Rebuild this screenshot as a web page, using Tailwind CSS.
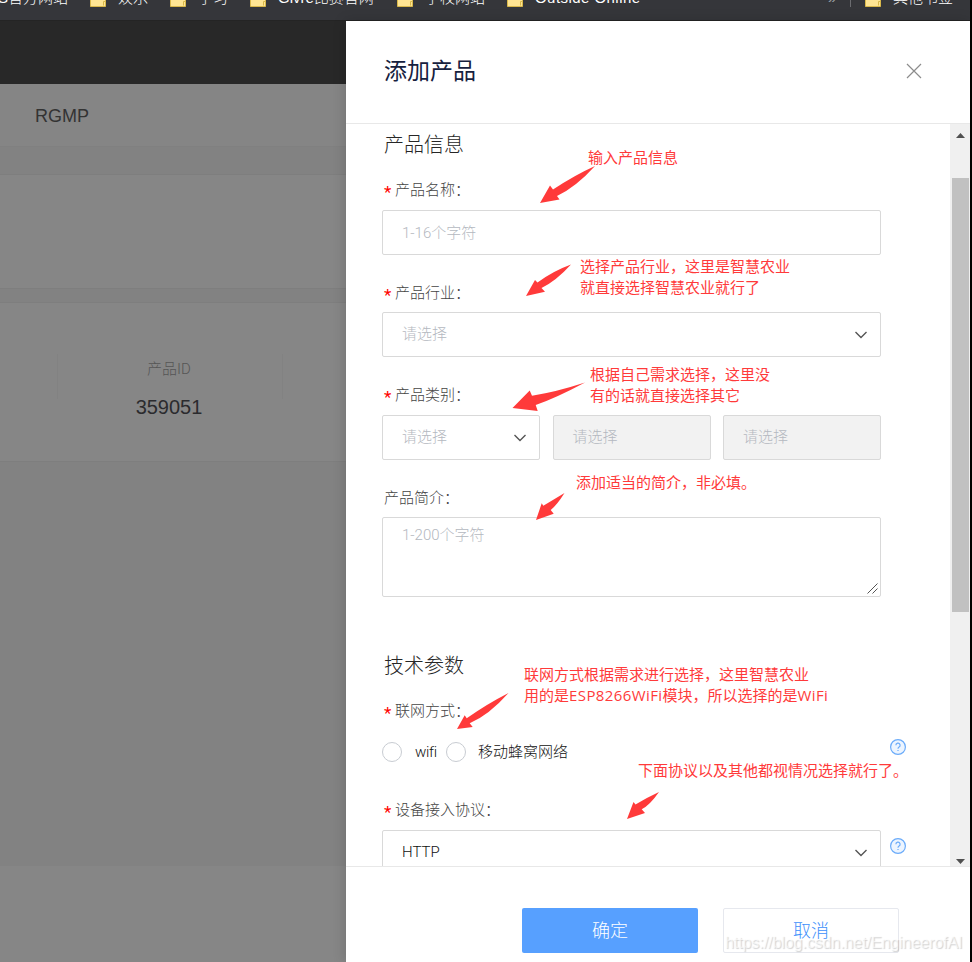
<!DOCTYPE html>
<html lang="zh-CN">
<head>
    <meta charset="UTF-8">
    <meta name="viewport" content="width=device-width, initial-scale=1.0">
    <title>添加产品</title>
    <script src="https://cdn.jsdelivr.net/npm/@tailwindcss/browser@4"></script>
</head>
<body class="font-['Liberation_Sans','Noto_Sans_CJK_SC',sans-serif]">
    <svg class="hidden">
        <symbol id="folder" viewBox="0 0 16 16">
            <path d="M.5 1.5h6l1 2h8v12H.5z" fill="#ffe593" stroke="#d9b84a"/>
            <path d="M13.5 14.5v-4h1.5" fill="none" stroke="#d9b84a"/>
        </symbol>
        <symbol id="chevron" viewBox="0 0 12 8">
            <path d="M.5 1 6 6.5 11.5 1" fill="none" stroke="#555" stroke-width="1.4"/>
        </symbol>
        <symbol id="help" viewBox="0 0 16 16">
            <circle cx="8" cy="8" r="7.4" fill="#edf5ff" stroke="#6aabfa" stroke-width="1.2"/>
            <path d="M5.9 6.3a2.1 2.1 0 1 1 3.2 1.7C8.3 8.5 8 8.8 8 9.7M8 10.9v1.2" fill="none" stroke="#6aabfa" stroke-width="1.2"/>
        </symbol>
    </svg>

    <div class="relative w-[972px] h-[962px] overflow-hidden bg-black flex flex-col">
        <!-- Bookmarks bar -->
        <div class="h-5 w-[970px] shrink-0 bg-[#35363a] overflow-hidden">
            <div class="flex items-center h-4 -mt-[9px] text-[15px] leading-[13px] font-light text-white whitespace-nowrap">
                <span class="w-[90px] h-4 -indent-[2px] shrink-0">S官方网站</span>
                <span class="w-20 shrink-0 flex gap-3"><svg class="size-4"><use href="#folder"/></svg>娱乐</span>
                <span class="w-20 shrink-0 flex gap-3"><svg class="size-4"><use href="#folder"/></svg>学习</span>
                <span class="w-[147px] shrink-0 flex gap-3"><svg class="size-4"><use href="#folder"/></svg>Givre比赛官网</span>
                <span class="w-[110px] shrink-0 flex gap-3"><svg class="size-4"><use href="#folder"/></svg>学校网站</span>
                <span class="flex-1 flex gap-3"><svg class="size-4"><use href="#folder"/></svg><span class="tracking-[0.45px]">Outside Online</span></span>
                <span class="w-[22px] h-4 text-[#9aa0a6]">»</span>
                <span class="w-[15px] h-4 border-l border-[#6b6c70]"></span>
                <span class="w-[105px] shrink-0 flex gap-3"><svg class="size-4"><use href="#folder"/></svg>其他书签</span>
            </div>
        </div>

        <div class="flex w-[970px] flex-1 border-t border-[#242424]">
            <!-- Dimmed page behind the drawer -->
            <div class="w-[346px] shrink-0 bg-[#828282] flex flex-col">
                <div class="h-[63px] bg-[#282828]"></div>
                <div class="h-[63px] bg-[#858585] border-b border-[#808080] flex items-center pt-0.5 pl-[35px] text-[18px] text-[#333]">RGMP</div>
                <div class="h-[27px]"></div>
                <div class="h-[115px] bg-[#868686] border-y border-[#7e7e7e]"></div>
                <div class="h-[13px]"></div>
                <div class="h-[160px] bg-[#868686] border-y border-[#7e7e7e] flex pt-[51px]">
                    <div class="ml-[57px] w-[226px] h-[45px] border-x border-[#828282] text-center">
                        <div class="text-[15px] leading-5 mt-[5px] -ml-0.5 font-light font-['Roboto','Noto_Sans_CJK_SC',sans-serif] text-[#555]">产品ID</div>
                        <div class="text-[20px] leading-6 mt-4 -ml-0.5 text-[#2b2b2e]">359051</div>
                    </div>
                </div>
                <div class="h-[404px]"></div>
                <div class="flex-1 bg-[#868686]"></div>
            </div>

            <!-- Drawer -->
            <div class="flex-1 min-w-0 bg-white flex flex-col shadow-[-1px_0_12px_rgba(0,0,0,0.15)] font-light font-['Roboto','Noto_Sans_CJK_SC',sans-serif]">
                <div class="h-[103px] shrink-0 border-b border-[#e8e8e8] flex items-center justify-between pl-[38px] pr-12">
                    <h1 class="pt-px text-[23px] font-normal text-[#16213e]">添加产品</h1>
                    <svg class="size-4 -mt-0.5" viewBox="0 0 16 16"><path d="M1 1l14 14M15 1L1 15" stroke="#8c8c8c" stroke-width="1.2"/></svg>
                </div>

                <div class="h-[742px] shrink-0 flex overflow-hidden">
                    <div class="flex-1 min-w-0 pl-9 text-[15px] text-[#444]">
                        <div class="w-[499px]">
                            <h2 class="pl-0.5 pt-[7px] h-[52px] text-[20px] leading-7 text-[#262626]">产品信息</h2>
                            <div class="h-[34px] pt-1 pl-0.5 leading-5 flex"><span class="w-[11px] pt-0.5 text-[17px] font-normal text-[#f00]">*</span>产品名称：</div>
                            <div class="h-[45px] border border-[#d9d9d9] rounded-xs flex items-center pt-px pl-[19px] text-[#b4b8c0]">1-16个字符</div>

                            <div class="h-[57px] pt-7 pl-0.5 leading-5 flex"><span class="w-[11px] pt-0.5 text-[17px] font-normal text-[#f00]">*</span>产品行业：</div>
                            <div class="h-[45px] border border-[#d9d9d9] rounded-xs flex items-center justify-between pl-[19px] pr-[13px] text-[#b4b8c0]">请选择<svg class="w-3 h-2"><use href="#chevron"/></svg></div>

                            <div class="h-[58px] pt-7 pl-0.5 leading-5 flex"><span class="w-[11px] pt-0.5 text-[17px] font-normal text-[#f00]">*</span>产品类别：</div>
                            <div class="flex justify-between">
                                <div class="w-[158px] h-[45px] border border-[#d9d9d9] rounded-xs flex items-center justify-between pl-[19px] pr-[13px] text-[#b4b8c0]">请选择<svg class="w-3 h-2"><use href="#chevron"/></svg></div>
                                <div class="w-[158px] h-[45px] border border-[#d9d9d9] rounded-xs bg-[#f2f2f2] flex items-center pl-[19px] text-[#b4b8c0]">请选择</div>
                                <div class="w-[158px] h-[45px] border border-[#d9d9d9] rounded-xs bg-[#f2f2f2] flex items-center pl-[19px] text-[#b4b8c0]">请选择</div>
                            </div>

                            <div class="h-[57px] pt-7 pl-0.5 leading-5">产品简介：</div>
                            <div class="h-20 border border-[#d9d9d9] rounded-xs flex justify-between pl-[19px] pr-0.5 pb-0.5 text-[#b4b8c0]">
                                <span class="pt-[7px] leading-5">1-200个字符</span>
                                <svg class="size-[11px] self-end" viewBox="0 0 11 11"><path d="M.5 10.5l10-10M5.5 10.5l5-5" stroke="#555"/></svg>
                            </div>

                            <h2 class="pl-0.5 pt-[55px] h-[101px] text-[20px] leading-7 text-[#262626]">技术参数</h2>
                            <div class="h-[43px] pt-[3px] pl-0.5 leading-5 flex"><span class="w-[11px] pt-0.5 text-[17px] font-normal text-[#f00]">*</span>联网方式：</div>
                        </div>
                        <div class="h-[21px] flex text-[#111]">
                            <div class="w-[508px] flex items-center">
                                <span class="size-5 rounded-full border border-[#c8ccd2]"></span><span class="ml-[13px] w-[31px] leading-5 tracking-[-0.3px]">wifi</span>
                                <span class="size-5 rounded-full border border-[#c8ccd2]"></span><span class="ml-3 leading-5">移动蜂窝网络</span>
                            </div>
                            <svg class="size-4 -mt-0.5"><use href="#help"/></svg>
                        </div>
                        <div class="h-[68px] pt-[38px] pl-0.5 leading-5 flex"><span class="w-[11px] pt-0.5 text-[17px] font-normal text-[#f00]">*</span>设备接入协议：</div>
                        <div class="flex gap-[9px]">
                            <div class="w-[499px] h-[45px] border border-[#d9d9d9] rounded-xs flex items-center justify-between pl-[19px] pr-[13px] text-[#111]">HTTP<svg class="w-3 h-2"><use href="#chevron"/></svg></div>
                            <svg class="size-4 mt-2"><use href="#help"/></svg>
                        </div>
                    </div>

                    <!-- Scrollbar -->
                    <div class="w-5 bg-[#f0f0f0] flex flex-col items-center">
                        <svg class="w-[9px] h-[5px] mt-[9px] shrink-0" viewBox="0 0 9 5"><path d="M0 5L4.5 0 9 5z" fill="#505050"/></svg>
                        <div class="w-[17px] h-[434px] mt-10 ml-px bg-[#c1c1c1]"></div>
                        <svg class="w-[9px] h-[5px] mt-auto mb-0.5 shrink-0" viewBox="0 0 9 5"><path d="M0 0h9L4.5 5z" fill="#505050"/></svg>
                    </div>
                </div>

                <!-- Footer buttons -->
                <div class="flex-1 border-t border-[#e8e8e8] flex gap-[25px] pl-44 pt-[41px] text-[18px]">
                    <button class="w-44 h-[45px] rounded-xs bg-[#57a0ff] text-white">确定</button>
                    <button class="w-44 h-[45px] rounded-xs border border-[#e6e8ee] text-[#3d90fb]">取消</button>
                </div>
            </div>
        </div>

        <!-- Red notes over the form -->
        <div class="absolute inset-0 pointer-events-none font-['Open_Sans','Noto_Sans_CJK_SC',sans-serif] text-[15px] leading-[21px] text-[#ff3a3a] whitespace-nowrap">
            <svg class="absolute inset-0 w-full h-full" viewBox="0 0 972 962" fill="#ff3a3a">
                <path d="M595 166Q576 187 557 196L559.5 199.5 540 203 550 185.5 553 189.5Q575 175 595 166z"/>
                <path d="M571 264.5Q556 281 541.5 288L545 291.7 526 296 535 280 537.5 282.5Q553 271 571 264.5z"/>
                <path d="M585 382.5Q556 398 535.7 405L537.7 411 512.5 408 529.7 390.5 532 395.7Q556 392 585 382.5z"/>
                <path d="M564.5 493Q557 505 550.7 510L553.7 513.7 536 520 541.7 503.3 543.3 505.7Q553 500 564.5 493z"/>
                <path d="M508.5 693Q489 715 469.7 723.3L472.7 727 457 729 464.7 715.3 466.7 718.3Q487 704 508.5 693z"/>
                <path d="M659 792Q650 805 641.7 809.3L645 813 627 819 633.5 802 635.5 804.5Q646 798 659 792z"/>
            </svg>
            <p class="absolute left-[588px] top-[147px]">输入产品信息</p>
            <p class="absolute left-[580px] top-[256px]">选择产品行业，这里是智慧农业<br>就直接选择智慧农业就行了</p>
            <p class="absolute left-[590px] top-[364px]">根据自己需求选择，这里没<br>有的话就直接选择其它</p>
            <p class="absolute left-[576px] top-[472px]">添加适当的简介，非必填。</p>
            <p class="absolute left-[524px] top-[664px]">联网方式根据需求进行选择，这里智慧农业<br>用的是<span class="tracking-[0.4px]">ESP8266WiFi</span>模块，所以选择的是<span class="tracking-[0.4px]">WiFi</span></p>
            <p class="absolute left-[638px] top-[760px]">下面协议以及其他都视情况选择就行了。</p>
        </div>
        <p class="absolute left-[725px] top-[933px] text-[16px] leading-5 tracking-[-0.08px] text-white/60 [text-shadow:1px_1px_1px_rgba(0,0,0,0.18)]">https://blog.csdn.net/EngineerofAI</p>
    </div>
</body>
</html>
